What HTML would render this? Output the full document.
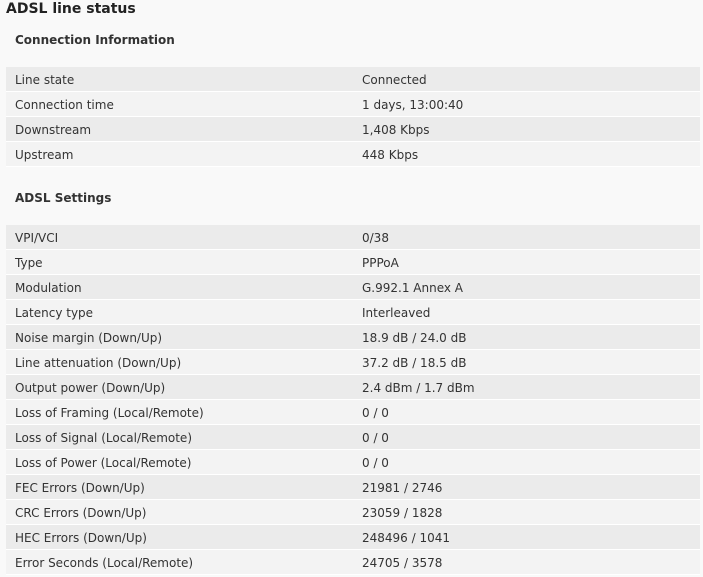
<!DOCTYPE html>
<html><head><style>
html,body{margin:0;padding:0;background:#f9f9f9;width:703px;height:577px;overflow:hidden;font-family:"DejaVu Sans",Verdana,sans-serif;color:#333;}
h1{position:absolute;left:6px;top:0;margin:0;font-size:14px;font-weight:bold;line-height:18px;color:#222;}
h2{position:absolute;left:15px;margin:0;font-size:12px;font-weight:bold;color:#333;}
table{position:absolute;left:6px;width:694px;border-collapse:collapse;font-size:12px;}
td{height:23px;padding:1px 0 0 0;border-bottom:1px solid #fff;}
td:first-child{padding-left:9px;width:347px;}
tr:nth-child(odd) td{background:#ebebeb;}
tr:nth-child(even) td{background:#f3f3f3;}
</style></head><body>
<h1>ADSL line status</h1>
<h2 style="top:33px">Connection Information</h2>
<table style="top:67px">
<tr><td>Line state</td><td>Connected</td></tr>
<tr><td>Connection time</td><td>1 days, 13:00:40</td></tr>
<tr><td>Downstream</td><td>1,408 Kbps</td></tr>
<tr><td>Upstream</td><td>448 Kbps</td></tr>
</table>
<h2 style="top:191px">ADSL Settings</h2>
<table style="top:225px">
<tr><td>VPI/VCI</td><td>0/38</td></tr>
<tr><td>Type</td><td>PPPoA</td></tr>
<tr><td>Modulation</td><td>G.992.1 Annex A</td></tr>
<tr><td>Latency type</td><td>Interleaved</td></tr>
<tr><td>Noise margin (Down/Up)</td><td>18.9 dB / 24.0 dB</td></tr>
<tr><td>Line attenuation (Down/Up)</td><td>37.2 dB / 18.5 dB</td></tr>
<tr><td>Output power (Down/Up)</td><td>2.4 dBm / 1.7 dBm</td></tr>
<tr><td>Loss of Framing (Local/Remote)</td><td>0 / 0</td></tr>
<tr><td>Loss of Signal (Local/Remote)</td><td>0 / 0</td></tr>
<tr><td>Loss of Power (Local/Remote)</td><td>0 / 0</td></tr>
<tr><td>FEC Errors (Down/Up)</td><td>21981 / 2746</td></tr>
<tr><td>CRC Errors (Down/Up)</td><td>23059 / 1828</td></tr>
<tr><td>HEC Errors (Down/Up)</td><td>248496 / 1041</td></tr>
<tr><td>Error Seconds (Local/Remote)</td><td>24705 / 3578</td></tr>
</table>
</body></html>
